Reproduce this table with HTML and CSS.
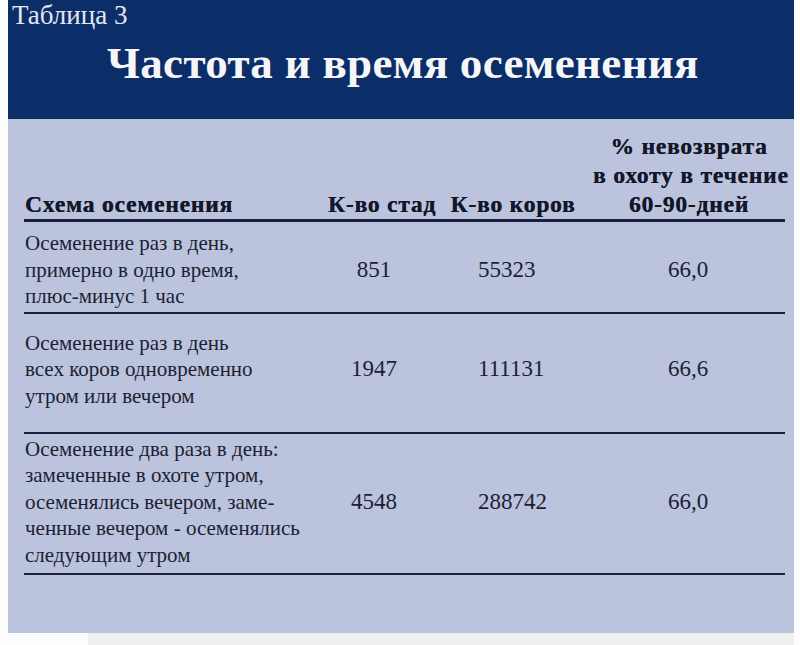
FILE: index.html
```html
<!DOCTYPE html>
<html lang="ru">
<head>
<meta charset="utf-8">
<title>Таблица 3</title>
<link rel="stylesheet" href="styles.css">
</head>
<body>
<div class="page">
  <div class="panel">
    <div class="banner">
      <div class="label">Таблица 3</div>
      <h1 class="title">Частота и время осеменения</h1>
    </div>
    <div class="table">
      <div class="row head">
        <div class="cell c1">Схема осеменения</div>
        <div class="cell c2">К-во стад</div>
        <div class="cell c3">К-во коров</div>
        <div class="cell c4">% невозврата<br>в охоту в течение<br>60-90-дней</div>
      </div>
      <div class="row r1">
        <div class="cell c1">Осеменение раз в день,<br>примерно в одно время,<br>плюс-минус 1 час</div>
        <div class="cell c2 num">851</div>
        <div class="cell c3 num">55323</div>
        <div class="cell c4 num">66,0</div>
      </div>
      <div class="row r2">
        <div class="cell c1">Осеменение раз в день<br>всех коров одновременно<br>утром или вечером</div>
        <div class="cell c2 num">1947</div>
        <div class="cell c3 num">111131</div>
        <div class="cell c4 num">66,6</div>
      </div>
      <div class="row r3">
        <div class="cell c1">Осеменение два раза в день:<br>замеченные в охоте утром,<br>осеменялись вечером, заме-<br>ченные вечером - осеменялись<br>следующим утром</div>
        <div class="cell c2 num">4548</div>
        <div class="cell c3 num">288742</div>
        <div class="cell c4 num">66,0</div>
      </div>
    </div>
  </div>
  <div class="shadow"></div>
</div>
</body>
</html>
```
FILE: styles.css
```css
html, body {
  margin: 0;
  padding: 0;
  background: #fdfdfd;
}
body {
  width: 800px;
  height: 645px;
  overflow: hidden;
  font-family: "Liberation Serif", "Times New Roman", serif;
}
.page {
  padding-left: 8px;
  width: 786px;
}
.panel {
  background: #bcc3dc;
  height: 633px;
}
.banner {
  background: #0b2e69;
  height: 119px;
  box-sizing: border-box;
  padding-top: 1px;
}
.label {
  color: #e4e7f0;
  font-size: 27px;
  line-height: 28px;
  padding-left: 4px;
}
.title {
  margin: 0;
  color: #f6f6f8;
  font-weight: bold;
  font-size: 45px;
  line-height: 50px;
  padding-left: 99px;
  padding-top: 9px;
  letter-spacing: 0.3px;
}
.table {
  padding: 0 9px 0 16px;
  color: #1b1f33;
}
.row {
  display: grid;
  grid-template-columns: 298px 120px 142px 201px;
  align-items: center;
  border-bottom: 2px solid #1a2040;
}
.cell {
  white-space: nowrap;
  font-size: 21px;
  line-height: 26.6px;
}
.c1 { padding-left: 1px; }
.head {
  align-items: end;
  padding-top: 13px;
  border-bottom-width: 3px;
}
.head .cell {
  font-weight: bold;
  font-size: 23.5px;
  line-height: 29px;
  letter-spacing: 0.8px;
  text-align: center;
  color: #13172a;
  text-shadow: 0.3px 0 0 #13172a;
}
.head .c1 { text-align: left; }
.head .c4 { padding-left: 9px; }
.num {
  text-align: center;
  font-size: 23px;
}
.num.c2 { padding-right: 16px; }
.num.c3 { text-align: left; padding-left: 36px; }
.num.c4 { padding-left: 7px; }
.r1 { padding: 8px 0 2px; }
.r2 { padding: 16px 0 22px; }
.r3 { padding: 2px 0 4px; }
.shadow {
  height: 12px;
  margin-left: 80px;
  background: #efeff0;
}
```
